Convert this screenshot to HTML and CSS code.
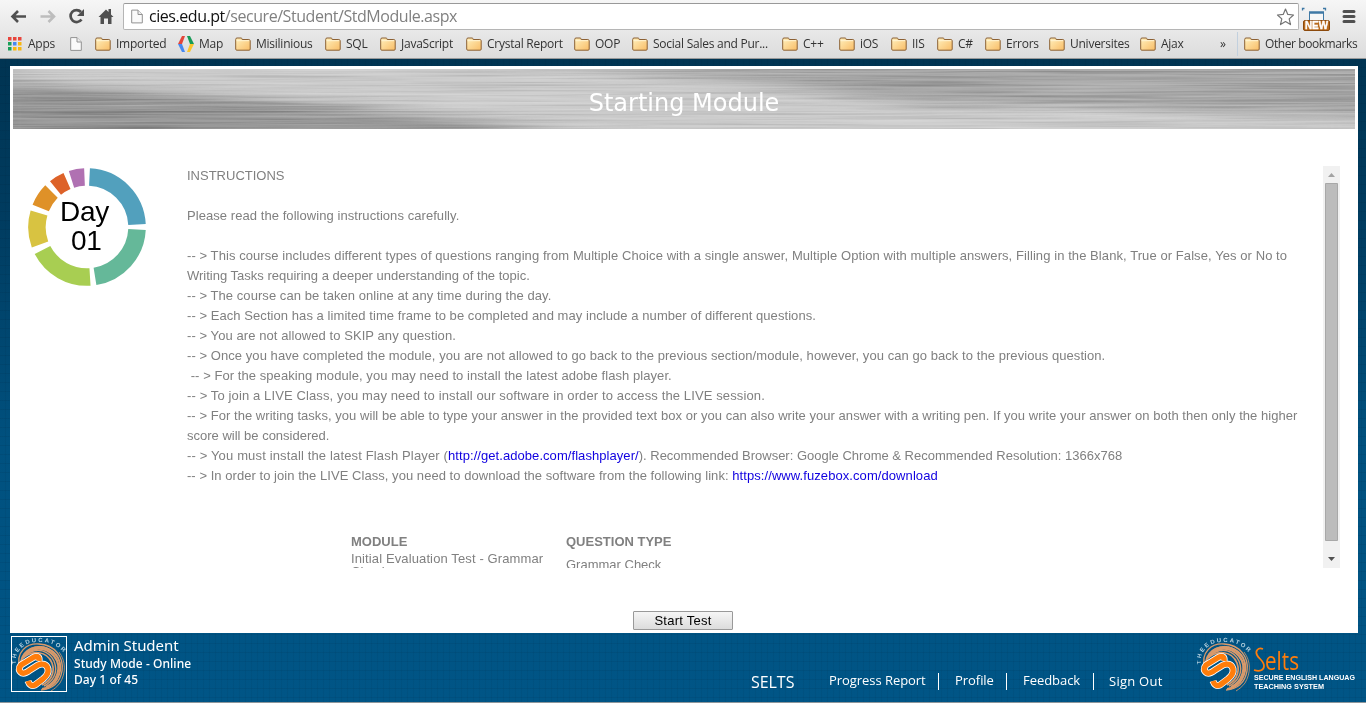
FILE: index.html
```
<!DOCTYPE html>
<html lang="en">
<head>
<meta charset="utf-8">
<title>Starting Module</title>
<link rel="stylesheet" href="styles.css">
</head>
<body>
<svg class="defs" width="0" height="0" aria-hidden="true">
  <defs>
    <linearGradient id="fold" x1="0" y1="0" x2="1" y2="1"><stop offset="0" stop-color="#fff0bd"/><stop offset="1" stop-color="#f9bd67"/></linearGradient>
    <symbol id="folder" viewBox="0 0 16 14"><path d="M.7 12.2V2.5Q.7 1 2 1H6.2Q7 1 7.2 2.5H13.8Q15.2 2.6 15.2 4V12.2Q15.2 13.2 14 13.2H1.900Q.7 13.2.7 12.2Z" fill="url(#fold)" stroke="#8b6034"/><path d="M1.500 3.700H14.400" stroke="#fff5d5"/></symbol>
    <symbol id="page" viewBox="0 0 12 14"><path d="M.7.6H7L11.300 5V13.400H.7Z" fill="#fafafa" stroke="#929292"/><path d="M7 .6V5H11.300" fill="#eee" stroke="#929292"/></symbol>
    <symbol id="emblem" viewBox="0 0 56 56">
      <g fill="none" stroke="#d99a6b">
        <path d="M8 31C3 15 15 6 27 7C43 8 52 20 50 34C48 46 40 52 29 53" stroke-width="1.400"/>
        <path d="M9 25C11 12 25 7 36 12C49 18 51 31 45 42C42 48 36 51 30 52" stroke-width="2"/>
        <path d="M12 20C20 8 34 10 42 19C51 30 45 45 34 50" stroke-width="2.200"/>
        <path d="M14 18C25 9 37 14 42 24C47 36 40 45 32 49" stroke-width="1.400"/>
        <path d="M10 22C20 12 35 14 40 26C44 37 37 45 30 48" stroke-width="1.700"/>
        <path d="M16 13C32 3 47 16 48 27C49 39 43 48 34 52" stroke-width="1"/>
        <path d="M47 15C54 24 54 36 48 46C45 50 42 52 39 54" stroke-width=".8"/>
      </g>
      <g fill="none" stroke-linejoin="round">
        <path d="M27 24Q28 18 22 20L9 28Q5 33 10 36Q13 37 18 33L26 28Q34 25 36 32Q37 37 31 42L23 48Q18 50 16 44" stroke="#fff" stroke-width="7"/>
        <path d="M27 24Q28 18 22 20L9 28Q5 33 10 36Q13 37 18 33L26 28Q34 25 36 32Q37 37 31 42L23 48Q18 50 16 44" stroke="#ff7d0b" stroke-width="5.400"/>
      </g>
      <path id="arc" d="M4 27C2 13 14 5 25 5C35 4.500 43 6 53 17" fill="none"/>
      <text class="ring"><textPath href="#arc" textLength="64">THEEDUCATOR</textPath></text>
    </symbol>
  </defs>
</svg>

<header class="browser">
  <div class="toolbar">
    <svg class="nav" width="120" height="32" viewBox="0 0 120 32">
      <path d="M24.500 16.500H12M16.500 11L11 16.500L16.500 22" fill="none" stroke="#505050" stroke-width="2.600"/>
      <path d="M39 16.500H51.500M47 11L52.500 16.500L47 22" fill="none" stroke="#bdbdbd" stroke-width="2.600"/>
      <path d="M79.500 12A6 6 0 1 0 80 19.500" fill="none" stroke="#505050" stroke-width="2.700"/><path d="M82.500 9V16H75.500Z" fill="#505050"/>
      <path d="M97 17L104.500 9.500L107 12V9H109.500V14.500L112 17H110V24H106.500V18.500H102.500V24H99V17Z" fill="#505050"/>
    </svg>
    <div class="address">
      <svg class="doc" width="12" height="15"><use href="#page"/></svg>
      <span class="url"><b>cies.edu.pt</b>/secure/Student/StdModule.aspx</span>
      <svg class="star" width="19" height="18" viewBox="0 0 18 18"><path d="M9 1L11.300 6.400L17 7L12.700 10.900L14 16.600L9 13.600L4 16.600L5.300 10.900L1 7L6.700 6.400Z" fill="#fff" stroke="#757575" stroke-width="1.200" stroke-linejoin="round"/></svg>
    </div>
    <svg class="tools" width="67" height="32" viewBox="0 0 67 32">
      <path d="M11.500 20V12.500H25.500V20" fill="#f7f7f7" stroke="#3f79a5"/><path d="M11 12.500H26" stroke="#3f79a5" stroke-width="2.500"/><path d="M4.500 10.500V8.500H6.500M25 8.500H27.500V10.500" fill="none" stroke="#3f79a5" stroke-width="1.300"/>
      <rect x="5.500" y="20.500" width="26" height="10" rx="1.500" fill="#b86a1c" stroke="#8c4a0c"/><text x="7" y="29" textLength="23" lengthAdjust="spacingAndGlyphs" class="new">NEW</text>
      <path d="M46 11.500H56M46 16.500H56M46 21.500H56" stroke="#505050" stroke-width="3" stroke-linecap="round"/>
    </svg>
  </div>
  <nav class="bookmarks">
    <span><svg width="14" height="14" viewBox="0 0 14 14"><path d="M0 0H3.500V3.500H0ZM5 0H8.500V3.500H5ZM10 0H13.500V3.500H10Z" fill="#e8453c"/><path d="M0 5H3.500V8.500H0Z" fill="#1a9f58"/><path d="M5 5H8.500V8.500H5Z" fill="#4688f1"/><path d="M10 5H13.500V8.500H10ZM5 10H8.500V13.500H5ZM10 10H13.500V13.500H10Z" fill="#f8b70f"/><path d="M0 10H3.500V13.500H0Z" fill="#1a9f58"/></svg><i>Apps</i></span>
    <span><svg width="12" height="14"><use href="#page"/></svg></span>
    <span><svg width="16" height="14"><use href="#folder"/></svg><i>Imported</i></span>
    <span><svg width="16" height="16" viewBox="0 0 16 16"><path d="M4 0H7L4 8H0Z" fill="#e3463b"/><path d="M0 8H4L7 16H4Z" fill="#4688f1"/><path d="M9 0H12L16 8H12Z" fill="#169b56"/><path d="M12 8H16L12 16H9Z" fill="#fac52d"/></svg><i>Map</i></span>
    <span><svg width="16" height="14"><use href="#folder"/></svg><i>Misilinious</i></span>
    <span><svg width="16" height="14"><use href="#folder"/></svg><i>SQL</i></span>
    <span><svg width="16" height="14"><use href="#folder"/></svg><i>JavaScript</i></span>
    <span><svg width="16" height="14"><use href="#folder"/></svg><i>Crystal Report</i></span>
    <span><svg width="16" height="14"><use href="#folder"/></svg><i>OOP</i></span>
    <span><svg width="16" height="14"><use href="#folder"/></svg><i>Social Sales and Pur...</i></span>
    <span><svg width="16" height="14"><use href="#folder"/></svg><i>C++</i></span>
    <span><svg width="16" height="14"><use href="#folder"/></svg><i>iOS</i></span>
    <span><svg width="16" height="14"><use href="#folder"/></svg><i>IIS</i></span>
    <span><svg width="16" height="14"><use href="#folder"/></svg><i>C#</i></span>
    <span><svg width="16" height="14"><use href="#folder"/></svg><i>Errors</i></span>
    <span><svg width="16" height="14"><use href="#folder"/></svg><i>Universites</i></span>
    <span><svg width="16" height="14"><use href="#folder"/></svg><i>Ajax</i></span>
    <span class="more"><i>»</i></span>
    <span class="other"><svg width="16" height="14"><use href="#folder"/></svg><i>Other bookmarks</i></span>
  </nav>
</header>

<main class="site">
  <section class="panel">
    <div class="banner">
      <svg class="metal" width="1342" height="60" viewBox="0 0 1342 60" preserveAspectRatio="none">
        <defs>
          <filter id="brush" x="0" y="0" width="100%" height="100%" color-interpolation-filters="sRGB"><feTurbulence type="fractalNoise" baseFrequency=".005 .45" numOctaves="3" seed="8"/><feColorMatrix values="1.300 0 0 0 -.17 1.300 0 0 0 -.17 1.300 0 0 0 -.17 0 0 0 0 1"/></filter>
          <filter id="soft" x="-20%" y="-60%" width="140%" height="220%"><feGaussianBlur stdDeviation="34 5"/></filter>
        </defs>
        <rect width="1342" height="60" fill="#a8a8a8"/>
        <g filter="url(#soft)">
          <path d="M-60 -10H490L720 14L900 34L1400 50V75H660L330 36L0 12Z" fill="#cbcbcb"/>
          <path d="M-60 18L180 26L350 43L600 75H-60Z" fill="#979797"/>
        </g>
        <rect width="1342" height="60" filter="url(#brush)" class="grain"/>
      </svg>
      <h1>Starting Module</h1>
    </div>
    <div class="content">
      <div class="day">
        <svg id="ring" width="120" height="120" viewBox="-60 -60 120 120" fill="none" stroke-width="17.500">
          <path d="M2.500 -50A50 50 0 0 1 50 -2.500" stroke="#52a0bd"/>
          <path d="M50 2.500A50 50 0 0 1 8 49.400" stroke="#65b899"/>
          <path d="M3 50A50 50 0 0 1 -44.500 23" stroke="#a8ce52"/>
          <path d="M-47 17.500A50 50 0 0 1 -48 -14" stroke="#d8c341"/>
          <path d="M-46.300 -19A50 50 0 0 1 -35.500 -35.500" stroke="#df9128"/>
          <path d="M-31.500 -39A50 50 0 0 1 -20 -46" stroke="#dd6229"/>
          <path d="M-15.500 -47.700A50 50 0 0 1 -2.500 -50" stroke="#b071b2"/>
        </svg>
        <div class="daytext"><div>Day</div><div>01</div></div>
      </div>
      <div class="scroller">
        <div class="instructions">
          <p>INSTRUCTIONS</p><p>&nbsp;</p>
          <p class="normal">Please read the following instructions carefully.</p><p>&nbsp;</p>
          <p class="loose">-- &gt; This course includes different types of questions ranging from Multiple Choice with a single answer, Multiple Option with multiple answers, Filling in the Blank, True or False, Yes or No to</p>
          <p>Writing Tasks requiring a deeper understanding of the topic.</p>
          <p class="normal">-- &gt; The course can be taken online at any time during the day.</p>
          <p class="normal">-- &gt; Each Section has a limited time frame to be completed and may include a number of different questions.</p>
          <p class="loose">-- &gt; You are not allowed to SKIP any question.</p>
          <p class="normal">-- &gt; Once you have completed the module, you are not allowed to go back to the previous section/module, however, you can go back to the previous question.</p>
          <p class="normal">&nbsp;-- &gt; For the speaking module, you may need to install the latest adobe flash player.</p>
          <p class="wide">-- &gt; To join a LIVE Class, you may need to install our software in order to access the LIVE session.</p>
          <p class="snug">-- &gt; For the writing tasks, you will be able to type your answer in the provided text box or you can also write your answer with a writing pen. If you write your answer on both then only the higher</p>
          <p>score will be considered.</p>
          <p><span class="wider">-- &gt; You must install the latest Flash Player (</span><a class="normal">http://get.adobe.com/flashplayer/</a>). Recommended Browser: Google Chrome &amp; Recommended Resolution: 1366x768</p>
          <p class="snug">-- &gt; In order to join the LIVE Class, you need to download the software from the following link: <a class="loose">https://www.fuzebox.com/download</a></p>
          <div class="modules"><div><b>MODULE</b><div class="test">Initial Evaluation Test - Grammar Check</div></div><div class="type"><b>QUESTION TYPE</b><span>Grammar Check</span></div></div>
        </div>
        <svg class="bar" width="17" height="402" viewBox="0 0 17 402"><path d="M0 0H17V402H0Z" fill="#f1f1f1"/><path d="M2.500 17.500H14.500V374.500H2.500Z" fill="#bcbcbc" stroke="#a8a8a8"/><path d="M5 11L8.500 7L12 11Z" fill="#a3a3a3"/><path d="M5 391L8.500 395L12 391Z" fill="#505050"/></svg>
      </div>
    </div>
    <button>Start Test</button>
  </section>
  <footer>
    <div class="avatar"><svg width="56" height="56"><use href="#emblem"/></svg></div>
    <div class="student"><div class="name">Admin Student</div><div>Study Mode - Online</div><div>Day 1 of 45</div></div>
    <nav class="links"><span class="brand">SELTS</span><span>Progress Report</span><span>Profile</span><span>Feedback</span><span>Sign Out</span></nav>
    <svg class="logo" width="160" height="60" viewBox="0 0 160 60"><use href="#emblem" width="56" height="56" x="0" y="1"/>
      <path d="M66 13C61 11 58 15 60 19C62 23 67 25 67 30C67 34 63 36 57 34" fill="none" stroke="#ff7d0b" stroke-width="1.700"/><text class="selts" x="68" y="34" textLength="34" lengthAdjust="spacingAndGlyphs">elts</text><text class="tag" x="57" y="44" textLength="101" lengthAdjust="spacingAndGlyphs">SECURE ENGLISH LANGUAG</text><text class="tag" x="57" y="53" textLength="70" lengthAdjust="spacingAndGlyphs">TEACHING SYSTEM</text>
    </svg>
  </footer>
  <div class="taskbar"></div>
</main>
</body>
</html>
```

FILE: styles.css
```
* { box-sizing: border-box; }
body { margin: 0; width: 1366px; height: 703px; overflow: hidden; font: 13px/20px "Liberation Sans", Arial, sans-serif; color: #808080; }
.defs { position: absolute; }
.browser { height: 59px; background: linear-gradient(#f6f6f6, #dcdcdc); border-bottom: 1px solid #999; }
.toolbar { display: flex; height: 32px; }
.nav { flex: 0 0 123px; }
.address { width: 1176px; height: 27px; margin-top: 3px; display: flex; align-items: center; background: #fff; border: 1px solid #b5b5b5; border-top-color: #999; border-radius: 2px; padding: 0 3px 0 7px; }
.doc { margin-right: 6px; }
.url { font: 16px/22px "Open Sans", sans-serif; letter-spacing: -.45px; flex: 1; padding-bottom: 1px; }
.url b { font-weight: 400; color: #111; }
.new { font: bold 10px "Liberation Sans", sans-serif; fill: #fff; stroke: #fff; stroke-width: .4px; }
.tools { margin-left: -1px; }
.bookmarks { height: 24px; padding-left: 8px; display: grid; align-items: center; grid-template-columns: 62px 25px 83px 57px 90px 55px 86px 108px 58px 150px 57px 52px 46px 48px 64px 91px 80px 17px 129px; color: #333; }
.bookmarks span { display: flex; align-items: center; gap: 5px; height: 24px; }
.bookmarks i { font: 12px/16px "Open Sans", sans-serif; letter-spacing: -.25px; white-space: nowrap; padding-bottom: 1px; }
.bookmarks span:first-child { gap: 6px; }
.bookmarks .other { padding-left: 6px; border-left: 1px solid #c2d0de; }
.bookmarks .other i { letter-spacing: -.42px; }
.site { height: 644px; display: flex; flex-direction: column; background: repeating-linear-gradient(90deg, transparent 0 5px, rgba(0,20,40,.06) 5px 6px), repeating-linear-gradient(transparent 0 8px, rgba(0,20,40,.08) 8px 9px), linear-gradient(#003452, #003c60 25%, #00517f 60%, #005586); }
.panel { background: #fff; margin: 7px 8px 0 10px; height: 567px; padding: 3px; display: flex; flex-direction: column; align-items: center; }
.banner { width: 1342px; height: 60px; display: grid; }
.metal, .banner h1 { grid-area: 1 / 1; }
.grain { mix-blend-mode: soft-light; opacity: .5; }
h1 { margin: 0; z-index: 1; height: 60px; text-align: center; font: 24px/68px "DejaVu Sans", sans-serif; color: #fff; }
.content { width: 1342px; height: 439px; padding-top: 37px; display: flex; }
.day { width: 174px; display: grid; padding-left: 14px; align-content: start; }
.day > * { grid-area: 1 / 1; }
#ring { margin-top: 1px; }
.daytext { width: 120px; font-size: 28px; line-height: 29px; letter-spacing: -.3px; color: #000; padding: 31px 0 0 33px; z-index: 1; }
.daytext div + div { padding-left: 11px; }
.scroller { width: 1153px; height: 402px; display: flex; overflow: hidden; }
.instructions { width: 1136px; overflow: hidden; white-space: nowrap; height: 402px; }
p { margin: 0; }
.snug { letter-spacing: .045px; }
.normal { letter-spacing: .062px; }
.loose { letter-spacing: .077px; }
.wide { letter-spacing: .12px; }
.wider { letter-spacing: .15px; }
a { color: #1000e0; }
.modules { display: flex; padding: 47px 0 0 164px; white-space: normal; line-height: 17px; }
.modules > div { width: 215px; }
.modules b { display: block; }
.test { width: 200px; line-height: 13px; padding-top: 2px; letter-spacing: .12px; }
.type span { display: block; margin-top: 6px; }
button { width: 100px; height: 19px; margin: 43px 2px 0 0; padding: 0; border: 1px solid #999; border-radius: 1px; background: linear-gradient(#f5f5f5, #dcdcdc); font: 13px "Liberation Sans", sans-serif; letter-spacing: .25px; color: #000; }
footer { flex: 1; display: flex; color: #fff; font-family: "Open Sans", sans-serif; }
.avatar { width: 56px; height: 56px; margin: 3px 7px 0 11px; border: 1px solid #fff; overflow: hidden; }
.student { width: 677px; padding-top: 2px; font: 500 12px/16px "Noto Sans", sans-serif; letter-spacing: .05px; }
.name { font-size: 15px; line-height: 21px; font-weight: 400; letter-spacing: -.05px; }
.links { width: 446px; display: grid; grid-template-columns: 78px 110px 68px 87px 103px; padding-top: 40px; height: 60px; font-size: 13px; font-weight: 500; line-height: 15px; letter-spacing: -.05px; white-space: nowrap; }
.links span:nth-child(2), .links span:nth-child(3), .links span:nth-child(4) { border-right: 1px solid #fff; height: 17px; }
.links span:nth-child(n+3) { padding-left: 16px; }
.links span:last-child { padding-left: 15px; line-height: 16px; letter-spacing: .25px; }
.links .brand { font-size: 16px; line-height: 19px; font-weight: 400; }
.logo { flex: 0 0 160px; margin-top: 3px; }
.ring { font: bold 6px "Liberation Sans", sans-serif; fill: #b9d4e2; }
.selts { font: 25px "Open Sans", sans-serif; fill: #ff7d0b; }
.tag { font: bold 7.500px "Liberation Sans", sans-serif; fill: #fff; }
.taskbar { height: 1px; background: #8f979b; }
```
